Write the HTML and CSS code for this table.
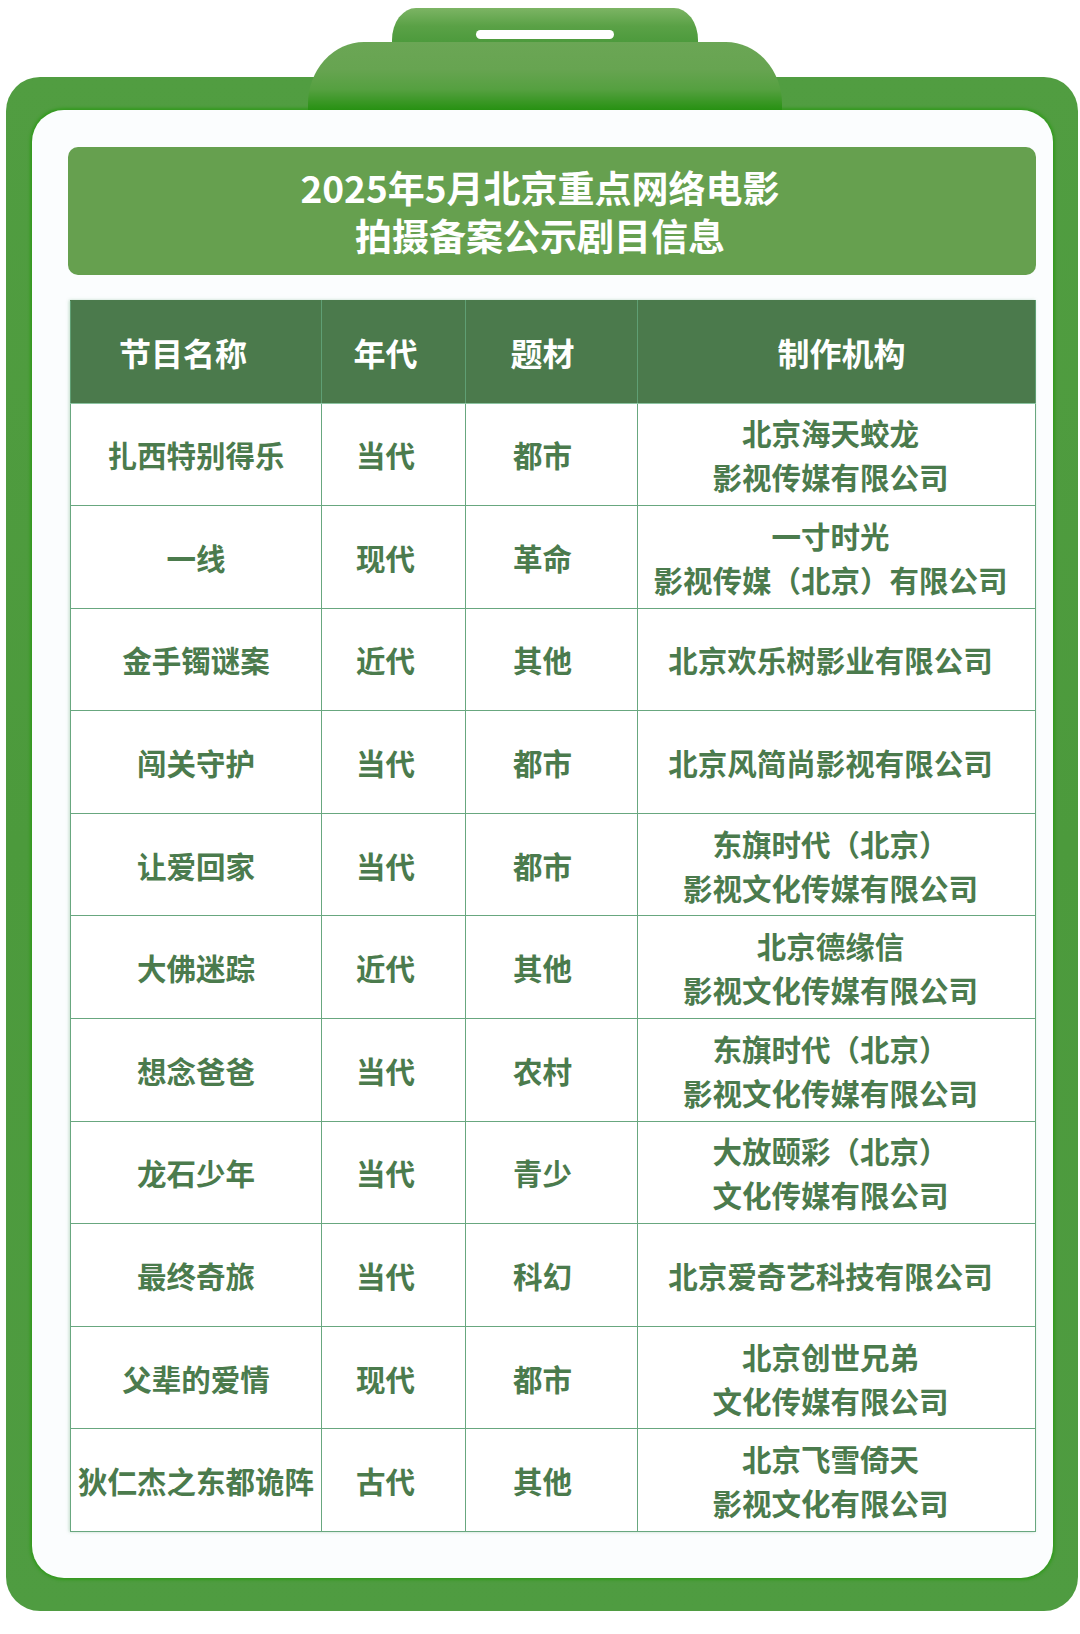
FILE: index.html
```html
<!DOCTYPE html>
<html lang="zh-CN">
<head>
<meta charset="utf-8">
<title>2025年5月北京重点网络电影拍摄备案公示剧目信息</title>
<link rel="stylesheet" href="styles.css">
</head>
<body>
<div class="page">
  <div class="frame">
    <div class="tab">
      <div class="tab-top"><div class="slot"></div></div>
      <div class="tab-bottom"></div>
    </div>
    <div class="card">
      <div class="title">
        <div class="title-line">2025年5月北京重点网络电影</div>
        <div class="title-line">拍摄备案公示剧目信息</div>
      </div>
      <table class="list">
        <colgroup>
          <col class="c1"><col class="c2"><col class="c3"><col class="c4">
        </colgroup>
        <thead>
          <tr>
            <th class="h1">节目名称</th>
            <th class="h2">年代</th>
            <th class="h3">题材</th>
            <th class="h4">制作机构</th>
          </tr>
        </thead>
        <tbody>
          <tr><td>扎西特别得乐</td><td class="d2">当代</td><td class="d3">都市</td><td class="d4">北京海天蛟龙<br>影视传媒有限公司</td></tr>
          <tr><td>一线</td><td class="d2">现代</td><td class="d3">革命</td><td class="d4">一寸时光<br>影视传媒（北京）有限公司</td></tr>
          <tr><td>金手镯谜案</td><td class="d2">近代</td><td class="d3">其他</td><td class="d4">北京欢乐树影业有限公司</td></tr>
          <tr><td>闯关守护</td><td class="d2">当代</td><td class="d3">都市</td><td class="d4">北京风简尚影视有限公司</td></tr>
          <tr><td>让爱回家</td><td class="d2">当代</td><td class="d3">都市</td><td class="d4">东旗时代（北京）<br>影视文化传媒有限公司</td></tr>
          <tr><td>大佛迷踪</td><td class="d2">近代</td><td class="d3">其他</td><td class="d4">北京德缘信<br>影视文化传媒有限公司</td></tr>
          <tr><td>想念爸爸</td><td class="d2">当代</td><td class="d3">农村</td><td class="d4">东旗时代（北京）<br>影视文化传媒有限公司</td></tr>
          <tr><td>龙石少年</td><td class="d2">当代</td><td class="d3">青少</td><td class="d4">大放颐彩（北京）<br>文化传媒有限公司</td></tr>
          <tr><td>最终奇旅</td><td class="d2">当代</td><td class="d3">科幻</td><td class="d4">北京爱奇艺科技有限公司</td></tr>
          <tr><td>父辈的爱情</td><td class="d2">现代</td><td class="d3">都市</td><td class="d4">北京创世兄弟<br>文化传媒有限公司</td></tr>
          <tr><td>狄仁杰之东都诡阵</td><td class="d2">古代</td><td class="d3">其他</td><td class="d4">北京飞雪倚天<br>影视文化有限公司</td></tr>
        </tbody>
      </table>
    </div>
  </div>
</div>
</body>
</html>
```
FILE: styles.css
```css
* { box-sizing: border-box; }
html, body {
  margin: 0;
  padding: 0;
  background: #ffffff;
}
body {
  width: 1080px;
  height: 1634px;
  overflow: hidden;
  font-family: "Noto Sans CJK SC", "Noto Sans", sans-serif;
}
.page {
  padding-top: 77px;
}
.frame {
  display: flow-root;
  margin-left: 6px;
  width: 1072px;
  padding: 0 25px 33px 26px;
  border-radius: 34px;
  background: linear-gradient(180deg, #519d41 0%, #4c9a3c 50%, #4f9c41 100%);
}
.tab {
  margin-top: -69px;
  margin-left: 276px;
  width: 474px;
  height: 102px;
  display: flex;
  flex-direction: column;
  align-items: center;
}
.tab-top {
  width: 306px;
  height: 40px;
  flex: none;
  border-radius: 24px 24px 0 0 / 32px 32px 0 0;
  background: linear-gradient(180deg, #7cb464 0%, #5aa146 45%, #489839 100%);
  padding-top: 22px;
}
.slot {
  width: 138px;
  height: 9px;
  margin: 0 auto;
  border-radius: 5px;
  background: #ffffff;
}
.tab-bottom {
  width: 474px;
  height: 68px;
  margin-top: -6px;
  flex: none;
  border-radius: 56px 56px 0 0 / 62px 62px 0 0;
  background: linear-gradient(180deg, #6ba655 0%, #67a451 40%, #55a040 70%, #279112 100%);
}
.card {
  background: #fbfdfe;
  border-radius: 32px;
  padding: 37px 17px 46px 36px;
  box-shadow: 0 0 3px 2px #339a1e;
}
.title {
  height: 128px;
  border-radius: 10px;
  background: #66a04f;
  color: #ffffff;
  font-size: 37px;
  font-weight: 700;
  text-align: center;
  display: flex;
  flex-direction: column;
  align-items: center;
  justify-content: center;
  padding-right: 24px;
}
.title-line {
  height: 48px;
  line-height: 48px;
}
.list {
  margin-top: 25px;
  margin-left: 2px;
  width: 965px;
  border-collapse: collapse;
  table-layout: fixed;
  box-shadow: -1px 0 3px rgba(90, 160, 110, 0.35);
}
.c1 { width: 251px; }
.c2 { width: 144px; }
.c3 { width: 172px; }
.c4 { width: 398px; }
.list th,
.list td {
  border: 1.5px solid #68a77f;
  text-align: center;
  vertical-align: middle;
  padding: 0;
}
.list th {
  height: 102.5px;
  background: #4b7a4c;
  color: #ffffff;
  font-size: 32px;
  font-weight: 700;
  border-color: #4b7a4c #5f9f74 #8cc4a2 #5f9f74;
}
.list td {
  height: 102.6px;
  color: #4b7b4d;
  font-size: 29.5px;
  font-weight: 700;
  line-height: 44px;
  background: #ffffff;
}
.h1 { padding-right: 26px !important; }
.h2 { padding-right: 16px !important; }
.h3 { padding-right: 18px !important; }
.h4 { padding-left: 10px !important; }
.d2 { padding-right: 16px !important; }
.d3 { padding-right: 18px !important; }
.d4 { padding-right: 12px !important; }
```
